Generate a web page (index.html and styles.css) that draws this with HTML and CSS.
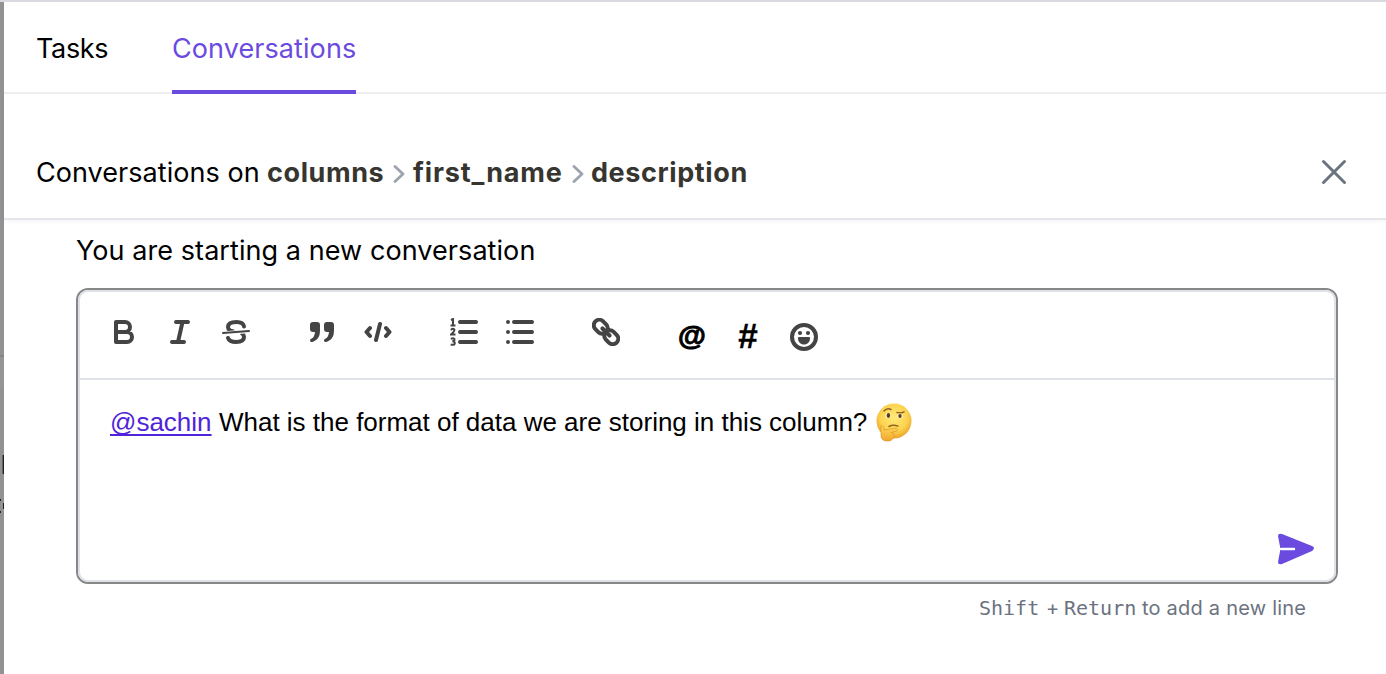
FILE: index.html
```html
<!DOCTYPE html>
<html lang="en">
<head>
<meta charset="utf-8">
<title>Conversations</title>
<link rel="stylesheet" href="styles.css">
</head>
<body>
<div class="app">
  <aside class="backdrop">
    <svg width="4" height="672" viewBox="0 2 4 672"><path d="M0 355h4v2H0z" fill="#858588"/><path d="M0 357h4v31H0z" fill="#959595"/><path d="M2.600 455H4v19H2.600zM0 499h1v2H0zM0 511h1v2H0zM3 503h1v6H3z" fill="#20201e"/></svg>
  </aside>
  <main class="panel">
    <nav class="tabs">
      <a class="tab tab-tasks">Tasks</a>
      <a class="tab tab-active">Conversations</a>
    </nav>
    <header class="header">
      <div class="trail">
        <span class="trail-lead">Conversations on</span>
        <b class="crumb crumb-columns">columns</b>
        <svg class="chevron" width="12" height="20" viewBox="0 0 12 20"><path d="M2 3.500l8 7.500-8 7.500" /></svg>
        <b class="crumb crumb-name">first_name</b>
        <svg class="chevron" width="12" height="20" viewBox="0 0 12 20"><path d="M2 3.500l8 7.500-8 7.500" /></svg>
        <b class="crumb crumb-desc">description</b>
      </div>
      <svg class="close" width="26" height="26" viewBox="0 0 26 26"><path d="M2.500 2.500l21 21M23.500 2.500l-21 21"/></svg>
    </header>
    <section class="thread">
      <p class="intro">You are starting a new conversation</p>
      <div class="editor">
        <div class="editor-inner">
          <div class="toolbar">
            <div class="group">
              <button class="tool"><svg width="28" height="28" viewBox="0 0 28 28"><path class="line4" d="M6 4h9a5 5 0 0 1 0 10H6zM6 14h11a5 5 0 0 1 0 10H6z"/></svg></button>
              <button class="tool"><svg width="28" height="28" viewBox="0 0 28 28"><path class="line4" d="M10 4h12M6 24h12M16.500 4l-4.500 20"/></svg></button>
              <button class="tool"><svg width="28" height="28" viewBox="0 0 28 28"><path class="line4" d="M22 8.500C21.500 5.500 19 4 14.500 4 8.500 4 6 6 6 9c0 2.500 2.500 4 5 4.300M6 20c1 2.800 3.500 4 8 4 5.500 0 8-2 8-5 0-1.700-.7-2.700-2-3.500"/><path class="gap" d="M1 15.500l26-2.500"/><path class="line2" d="M1 15l26-2"/></svg></button>
            </div>
            <div class="group">
              <button class="tool"><svg width="28" height="28" viewBox="0 0 28 28"><path d="M5 4h4q3 0 3 3v6q0 8-7 10.800-2.500.8-3-1-.2-1.400 1.600-2.200Q6.500 19.200 7 14H5q-3 0-3-3V7q0-3 3-3zM19 4h4q3 0 3 3v6q0 8-7 10.800-2.500.8-3-1-.2-1.400 1.600-2.200 2.900-1.400 3.400-6.600h-2q-3 0-3-3V7q0-3 3-3z"/></svg></button>
              <button class="tool"><svg width="28" height="28" viewBox="0 0 28 28"><path class="line4" d="M6 10L2.500 14l3.500 4M22 10l3.500 4-3.500 4M16 6l-4 16"/></svg></button>
            </div>
            <div class="group">
              <button class="tool"><svg width="28" height="28" viewBox="0 0 28 28"><path class="line4" d="M10 4h16M10 14h16M10 24h16"/><path class="numerals" d="M1 2l2-1v6.500M.5 7.500h5M.8 11.800q3-2 3.600 0 .2 1.500-3.400 4.700h4.500M.8 20.800q3.800-1.200 3.700.7 0 1.700-2.200 1.700 2.500 0 2.500 2 0 2.300-4.100 1.300"/></svg></button>
              <button class="tool"><svg width="28" height="28" viewBox="0 0 28 28"><path class="line4" d="M8 4h18M8 14h18M8 24h18M2 4h.01M2 14h.01M2 24h.01"/></svg></button>
            </div>
            <div class="group">
              <button class="tool"><svg width="28" height="28" viewBox="0 0 28 28"><g class="line4" transform="rotate(45 14 14)"><path d="M14 16q-2 3.500-5 3.500H4.500a5.500 5.500 0 0 1 0-11H9q3 0 5 3.500M14 12q2-3.500 5-3.500h4.500a5.500 5.500 0 0 1 0 11H19q-3 0-5-3.500M9 14h10"/></g></svg></button>
            </div>
            <div class="group group-insert">
              <button class="tool tool-at">@</button>
              <button class="tool tool-hash">#</button>
              <button class="tool"><svg width="28" height="28" viewBox="0 0 28 28"><circle class="line4" cx="14" cy="14" r="12"/><circle cx="10" cy="10" r="2.100"/><circle cx="18" cy="10" r="2.100"/><path d="M8 15q0-1 1-1h10q1 0 1 1c0 4-2.500 6.500-6 6.500S8 19 8 15z"/></svg></button>
            </div>
          </div>
          <div class="message">
            <div class="line"><a class="mention">@sachin</a><span class="words">What is the format of data we are storing in this column?</span>
              <svg class="emoji" width="36" height="40" viewBox="0 0 36 40">
                <defs><radialGradient id="face" cx="50%" cy="40%" r="60%"><stop offset="0" stop-color="#ffe978"/><stop offset=".65" stop-color="#fcd34f"/><stop offset="1" stop-color="#eca12b"/></radialGradient><linearGradient id="hand" x2="0" y2="1"><stop offset="0" stop-color="#ffdc58"/><stop offset="1" stop-color="#efa52f"/></linearGradient></defs>
                <circle cx="18" cy="18" r="17.500" fill="url(#face)"/>
                <g fill="none" stroke="#916221" stroke-width="1.500" stroke-linecap="round"><path d="M8 8q3-3.500 7-1.500M21 9.500q4 1 7-.7M13 23.500q4-2.300 9-.4"/></g>
                <ellipse cx="12" cy="12.500" rx="2.600" ry="3" fill="#fff1c3"/><ellipse cx="24" cy="13" rx="3" ry="2.500" fill="#fff1c3"/>
                <ellipse cx="12.400" cy="12.500" rx="1.700" ry="2.400" fill="#5f3c19"/><ellipse cx="24" cy="13" rx="1.700" ry="2.100" fill="#5f3c19"/>
                <path d="M5 23c2-1 2.700 1 3 4l11-1.800c3-.3 3.500 2.500 1 3l-5 1.300c3 .5 3.800 2 2.500 3.200 1 1 .5 2.500-1 3-.4 1.500-2.500 2.300-5 2.300-4.500 0-6.500-2-6.500-6z" fill="url(#hand)" stroke="#d88d25" stroke-width=".6"/>
              </svg>
            </div>
            <svg class="send" width="38" height="32" viewBox="0 0 38 32"><path class="plane" d="M4 1l30 12q4 2 0 5L4 31q-4 1.200-4-2l2-10.500v-5L0 3Q0 0 4 1z"/><path class="fold" d="M3 16h13"/></svg>
          </div>
        </div>
      </div>
      <p class="hint"><kbd class="key-shift">Shift</kbd><span class="plus">+</span><kbd class="key-return">Return</kbd><span class="hint-text">to add a new line</span></p>
    </section>
  </main>
</div>
</body>
</html>
```
FILE: styles.css
```css
* { box-sizing: border-box; }
body { margin: 0; overflow: hidden; background: #fff; color: #000; font-family: Inter, sans-serif; }
p { margin: 0; }
svg { display: block; flex: none; }
.app { display: flex; height: 674px; border-top: 2px solid #dad9df; }
.backdrop { flex: none; width: 4px; background: #929292; }
.panel { flex: 1; min-width: 0; }
.tabs { display: flex; height: 92px; padding-left: 32px; border-bottom: 2px solid #eee; }
.tab { height: 92px; padding-top: 29px; font-size: 27px; line-height: 36px; white-space: nowrap; }
.tab-tasks { width: 136px; letter-spacing: -.35px; }
.tab-active { width: 184px; color: #6b4ae0; border-bottom: 4px solid #6b4ae0; letter-spacing: .08px; }
.header { display: flex; align-items: center; justify-content: space-between; height: 126px; padding: 33px 39px 0 32px; border-bottom: 2px solid #e5e5eb; box-shadow: 0 2px 5px rgba(0, 0, 0, .04); }
.trail { display: flex; align-items: center; font-size: 27px; line-height: 36px; white-space: nowrap; }
.trail-lead { width: 231px; letter-spacing: .05px; }
.crumb { color: #37352f; font-weight: 700; letter-spacing: .6px; }
.crumb-columns { width: 126px; }
.crumb-name { width: 159px; letter-spacing: .85px; }
.crumb-desc { margin-left: -1px; }
.chevron { width: 12px; margin-right: 8px; fill: none; stroke: #9ca3af; stroke-width: 2.8; stroke-linecap: round; stroke-linejoin: round; }
.close { margin-bottom: 2px; fill: none; stroke: #6b7280; stroke-width: 3; stroke-linecap: round; }
.thread { padding: 13px 48px 0 72px; }
.intro { height: 55px; font-size: 27px; line-height: 36px; letter-spacing: .07px; white-space: nowrap; }
.editor { height: 296px; border: 2px solid #878787; border-radius: 12px; }
.editor-inner { height: 292px; border: 2px solid #dee2e8; border-radius: 10px; }
.toolbar { display: flex; gap: 30px; height: 88px; padding: 12px 0 0 16px; border-bottom: 2px solid #dee2e8; }
.group { display: flex; height: 56px; }
.group-insert { margin-top: 5px; }
.tool { display: flex; align-items: center; justify-content: center; width: 56px; height: 56px; padding: 0; border: 0; background: none; fill: #444; color: #000; }
.tool-at { padding-bottom: 4px; font: 700 28.5px "Liberation Sans", sans-serif; -webkit-text-stroke: 1px #000; }
.tool-hash { padding-bottom: 2px; font: 700 35px/40px "Liberation Sans", sans-serif; -webkit-text-stroke: .4px #000; }
.line4, .line2, .gap { fill: none; stroke: #444; stroke-width: 4; stroke-linecap: round; stroke-linejoin: round; }
.line2 { stroke-width: 2; }
.gap { stroke: #fff; }
.numerals { fill: none; stroke: #444; stroke-width: 2; }
.message { display: flex; flex-direction: column; justify-content: space-between; height: 200px; padding: 20px 18px 15px 30px; }
.line { display: flex; align-items: center; height: 44px; font: 26px/36px "Liberation Sans", Arial, sans-serif; white-space: nowrap; }
.mention { width: 101px; color: #4f23d9; text-decoration: underline; text-decoration-thickness: 2px; text-decoration-skip-ink: none; text-underline-offset: 3px; }
.words { width: 649px; margin-left: 8px; letter-spacing: -.01px; }
.emoji { margin: 2px 0 0 8px; }
.send { align-self: flex-end; }
.plane { fill: #6b4ae0; }
.fold { fill: none; stroke: #fff; stroke-width: 2.500; stroke-linecap: round; }
.hint { display: flex; justify-content: flex-end; padding: 10px 32px 0 0; color: #6b7280; font-size: 20px; line-height: 28px; white-space: nowrap; }
.hint kbd { font: 20px/28px "DejaVu Sans Mono", monospace; }
.key-shift { width: 67px; }
.plus { width: 18px; }
.key-return { width: 78px; }
.hint-text { width: 164px; letter-spacing: .22px; }
```
